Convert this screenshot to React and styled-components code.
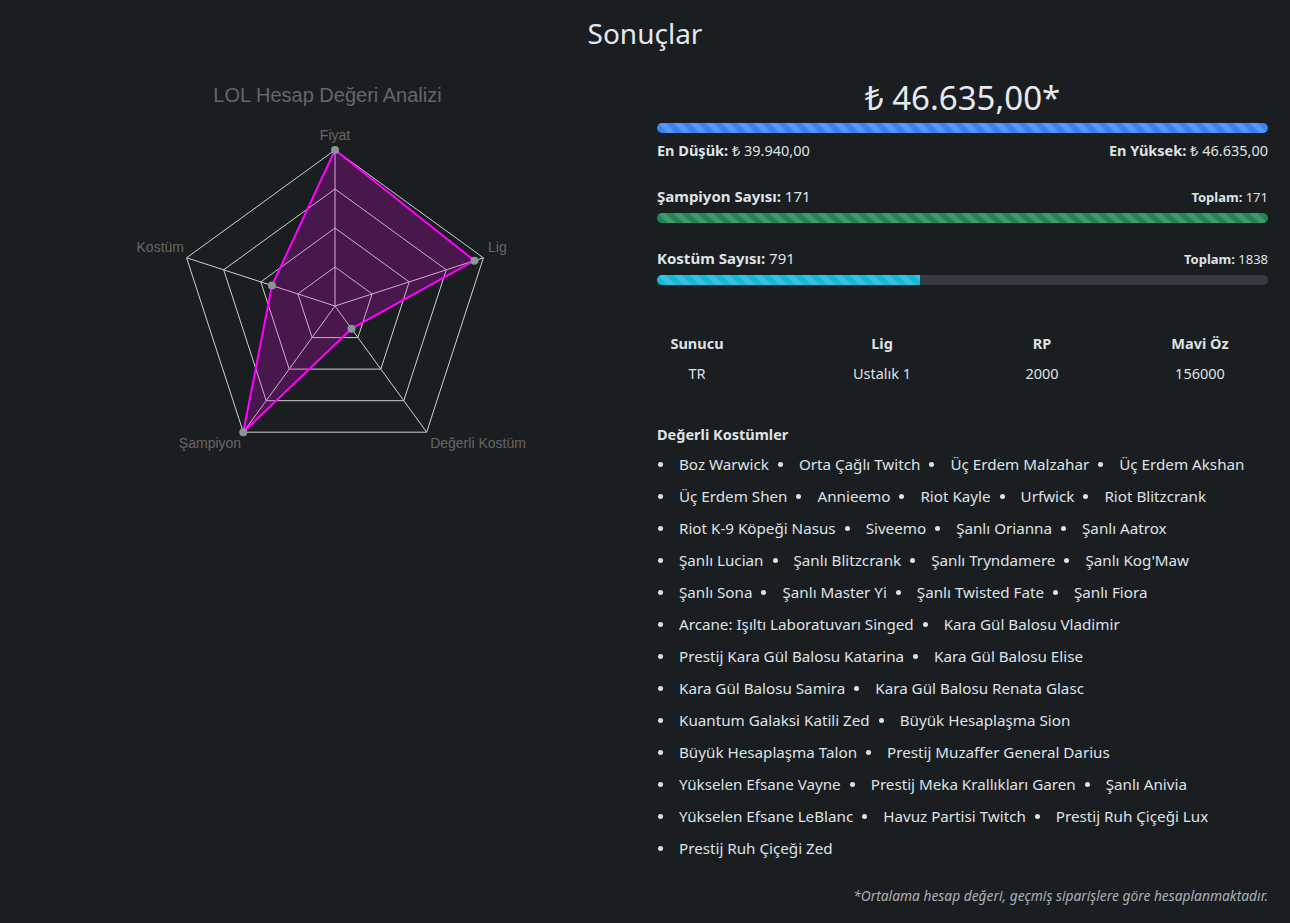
import styled, { createGlobalStyle } from "styled-components";

const GlobalStyle = createGlobalStyle`
  body {
    margin: 0;
    background: #1b1e21;
    color: #dee2e6;
    font-family: "Noto Sans", "Open Sans", sans-serif;
  }
`;

const Page = styled.div`
  width: 1290px;
  height: 923px;
  box-sizing: border-box;
  padding: 16px 22px 0;
`;

const Heading = styled.h2`
  margin: 0 0 26px;
  font-size: 28px;
  font-weight: 400;
  line-height: 34px;
  text-align: center;
  color: #e3e8ee;
`;

const Row = styled.div`
  display: grid;
  grid-template-columns: 611px 611px;
  column-gap: 24px;
`;

const ChartCol = styled.div`
  display: flex;
  flex-direction: column;
`;

const ChartTitle = styled.div`
  padding-top: 7px;
  font-family: "Liberation Sans", Arial, sans-serif;
  font-size: 20px;
  line-height: 24px;
  color: #666;
  text-align: center;
`;

const Side = styled.div`
  display: flex;
  flex-direction: column;
`;

const Price = styled.div`
  font-size: 33px;
  line-height: 43px;
  text-align: center;
  color: #e6ebf0;
`;

const Bar = styled.div`
  flex: none;
  height: 10px;
  border-radius: 5px;
  background: #353a41;
  overflow: hidden;
  margin-top: ${(p) => p.$top || 4}px;
`;

const Fill = styled.div`
  height: 100%;
  background-color: ${(p) => p.$color};
  background-image: linear-gradient(
    45deg,
    rgba(255, 255, 255, 0.15) 25%,
    transparent 25%,
    transparent 50%,
    rgba(255, 255, 255, 0.15) 50%,
    rgba(255, 255, 255, 0.15) 75%,
    transparent 75%,
    transparent
  );
  background-size: 16px 16px;
`;

const Split = styled.div`
  display: flex;
  justify-content: space-between;
  align-items: baseline;
  margin-top: ${(p) => p.$top}px;
  font-size: ${(p) => p.$size || 14}px;
  line-height: 22px;
`;

const Small = styled.span`
  font-size: 13px;
`;

const Stats = styled.div`
  display: grid;
  grid-template-columns: 230px 140px 180px 136px;
  margin: 43px 0 0 -75px;
  text-align: center;
  font-size: 14.5px;
  line-height: 30px;
`;

const Th = styled.div`
  font-weight: 700;
`;

const SectionTitle = styled.div`
  margin-top: 35px;
  font-size: 14.5px;
  font-weight: 700;
  line-height: 22px;
`;

const List = styled.ul`
  list-style: none;
  margin: 3px 0 0;
  padding: 0;
  display: flex;
  flex-direction: column;
`;

const Line = styled.li`
  display: flex;
  height: 32px;
  align-items: center;
`;

const Item = styled.span`
  display: flex;
  align-items: center;
  margin-right: 8px;
  font-size: 15.2px;
  white-space: nowrap;
  &::before {
    content: "";
    width: 5px;
    height: 5px;
    border-radius: 50%;
    background: #dee2e6;
    margin: 1px 16px 0 1px;
  }
`;

const Note = styled.div`
  margin-top: 22px;
  text-align: right;
  font-size: 13.8px;
  font-style: italic;
  color: #a9b0b7;
`;

const lines = [
  ["Boz Warwick", "Orta Çağlı Twitch", "Üç Erdem Malzahar", "Üç Erdem Akshan"],
  ["Üç Erdem Shen", "Annieemo", "Riot Kayle", "Urfwick", "Riot Blitzcrank"],
  ["Riot K-9 Köpeği Nasus", "Siveemo", "Şanlı Orianna", "Şanlı Aatrox"],
  ["Şanlı Lucian", "Şanlı Blitzcrank", "Şanlı Tryndamere", "Şanlı Kog'Maw"],
  ["Şanlı Sona", "Şanlı Master Yi", "Şanlı Twisted Fate", "Şanlı Fiora"],
  ["Arcane: Işıltı Laboratuvarı Singed", "Kara Gül Balosu Vladimir"],
  ["Prestij Kara Gül Balosu Katarina", "Kara Gül Balosu Elise"],
  ["Kara Gül Balosu Samira", "Kara Gül Balosu Renata Glasc"],
  ["Kuantum Galaksi Katili Zed", "Büyük Hesaplaşma Sion"],
  ["Büyük Hesaplaşma Talon", "Prestij Muzaffer General Darius"],
  ["Yükselen Efsane Vayne", "Prestij Meka Krallıkları Garen", "Şanlı Anivia"],
  ["Yükselen Efsane LeBlanc", "Havuz Partisi Twitch", "Prestij Ruh Çiçeği Lux"],
  ["Prestij Ruh Çiçeği Zed"],
];

const CX = 335;
const CY = 306;
const R = 156;
const values = [1, 0.94, 0.18, 1, 0.425];

const pt = (i, r) => {
  const a = ((-90 + 72 * i) * Math.PI) / 180;
  return [CX + r * Math.cos(a), CY + r * Math.sin(a)];
};

const ring = (r) =>
  [0, 1, 2, 3, 4].map((i) => pt(i, r).map((v) => v.toFixed(1)).join(",")).join(" ");

const Radar = () => {
  const data = values.map((v, i) => pt(i, v * R));
  const labelStyle = { fontFamily: "'Liberation Sans', Arial, sans-serif", fontSize: 14, fill: "#666" };
  return (
    <svg width="611" height="360" viewBox="22 107 611 360">
      {[1, 2, 3, 4].map((k) => (
        <polygon key={k} points={ring((R * k) / 4)} fill="none" stroke="#cfcfcf" strokeWidth="1" />
      ))}
      {[0, 1, 2, 3, 4].map((i) => {
        const [x, y] = pt(i, R);
        return <line key={i} x1={CX} y1={CY} x2={x} y2={y} stroke="#cfcfcf" strokeWidth="1" />;
      })}
      <polygon
        points={data.map((p) => p.join(",")).join(" ")}
        fill="rgba(255,0,255,0.2)"
        stroke="#ff00ff"
        strokeWidth="2"
        strokeLinejoin="round"
      />
      {data.map(([x, y], i) => (
        <circle key={i} cx={x} cy={y} r="4" fill="#8a959b" />
      ))}
      <text x="335" y="140" textAnchor="middle" style={labelStyle}>Fiyat</text>
      <text x="488" y="252" style={labelStyle}>Lig</text>
      <text x="184" y="252" textAnchor="end" style={labelStyle}>Kostüm</text>
      <text x="210" y="448" textAnchor="middle" style={labelStyle}>Şampiyon</text>
      <text x="478" y="448" textAnchor="middle" style={labelStyle}>Değerli Kostüm</text>
    </svg>
  );
};

const App = () => {
  return (
    <Page>
      <GlobalStyle />
      <Heading>Sonuçlar</Heading>
      <Row>
        <ChartCol>
          <ChartTitle>LOL Hesap Değeri Analizi</ChartTitle>
          <Radar />
        </ChartCol>
        <Side>
          <Price>₺ 46.635,00*</Price>
          <Bar>
            <Fill $color="#3b82f6" style={{ width: "100%" }} />
          </Bar>
          <Split $top={6} $size={14.5}>
            <span><b>En Düşük:</b> ₺ 39.940,00</span>
            <span><b>En Yüksek:</b> ₺ 46.635,00</span>
          </Split>
          <Split $top={24} $size={15}>
            <span><b>Şampiyon Sayısı:</b> 171</span>
            <Small><b>Toplam:</b> 171</Small>
          </Split>
          <Bar $top={5}>
            <Fill $color="#1f8656" style={{ width: "100%" }} />
          </Bar>
          <Split $top={24} $size={15}>
            <span><b>Kostüm Sayısı:</b> 791</span>
            <Small><b>Toplam:</b> 1838</Small>
          </Split>
          <Bar $top={5}>
            <Fill $color="#13b7d8" style={{ width: `${(791 / 1838) * 100}%` }} />
          </Bar>
          <Stats>
            <Th>Sunucu</Th>
            <Th>Lig</Th>
            <Th>RP</Th>
            <Th>Mavi Öz</Th>
            <div>TR</div>
            <div>Ustalık 1</div>
            <div>2000</div>
            <div>156000</div>
          </Stats>
          <SectionTitle>Değerli Kostümler</SectionTitle>
          <List>
            {lines.map((row, i) => (
              <Line key={i}>
                {row.map((name) => (
                  <Item key={name}>{name}</Item>
                ))}
              </Line>
            ))}
          </List>
          <Note>*Ortalama hesap değeri, geçmiş siparişlere göre hesaplanmaktadır.</Note>
        </Side>
      </Row>
    </Page>
  );
};

export default App;
